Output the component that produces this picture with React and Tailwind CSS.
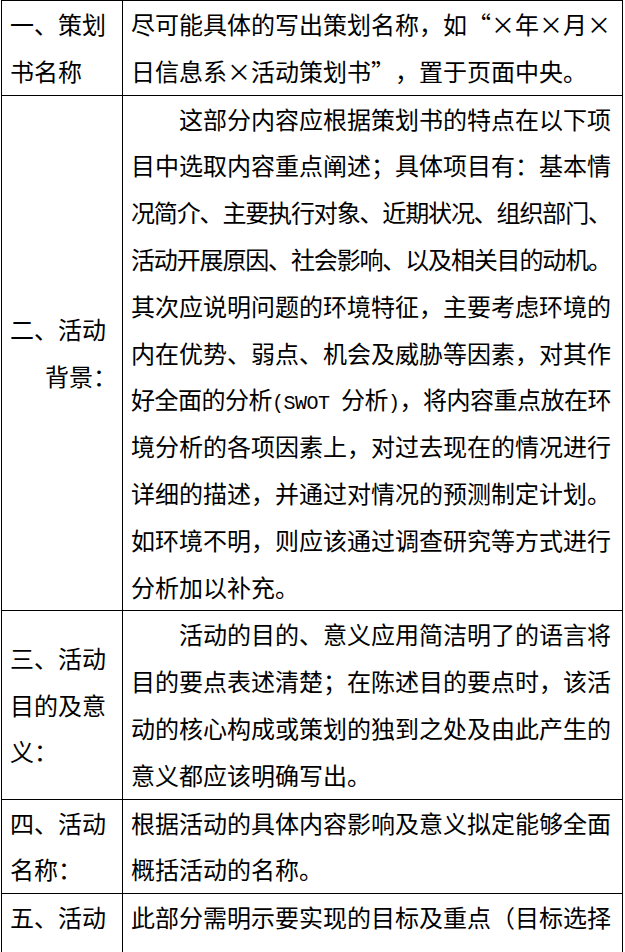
const Line = ({ children, className = "" }) => (
  <div className={`h-[46.8px] whitespace-nowrap ${className}`}>{children}</div>
);

const Wide = ({ children, align = "text-center" }) => (
  <span className={`inline-block w-[24px] ${align}`}>{children}</span>
);

const Mono = ({ children }) => (
  <span className="font-['Liberation_Mono',monospace] text-[20px] leading-none">{children}</span>
);

const Row = ({ label, children, center = true }) => (
  <div className="grid grid-cols-[121px_1fr] border-b border-black">
    <div
      className={`border-r border-black pl-2 flex flex-col ${
        center ? "justify-center" : "justify-start"
      }`}
    >
      {label}
    </div>
    <div className="pl-2">{children}</div>
  </div>
);

export default function App() {
  return (
    <div className="bg-white min-h-screen text-black text-[24px] leading-[46.8px] font-['Noto_Sans_CJK_SC',sans-serif]">
      <div className="ml-px w-[622px] border-l border-t border-r border-black">
        <Row
          center={false}
          label={
            <>
              <Line>一、策划</Line>
              <Line>书名称</Line>
            </>
          }
        >
          <Line>
            尽可能具体的写出策划名称，如<Wide align="text-right">“</Wide>
            <Wide>×</Wide>年<Wide>×</Wide>月<Wide>×</Wide>
          </Line>
          <Line>
            日信息系<Wide>×</Wide>活动策划书<Wide align="text-left">”</Wide>，置于页面中央。
          </Line>
        </Row>

        <Row
          label={
            <>
              <Line>二、活动</Line>
              <Line className="pl-[35px]">背景：</Line>
            </>
          }
        >
          <Line className="pl-[48px]">这部分内容应根据策划书的特点在以下项</Line>
          <Line>目中选取内容重点阐述；具体项目有：基本情</Line>
          <Line className="tracking-[-1.15px]">况简介、主要执行对象、近期状况、组织部门、</Line>
          <Line className="tracking-[-1.15px]">活动开展原因、社会影响、以及相关目的动机。</Line>
          <Line>其次应说明问题的环境特征，主要考虑环境的</Line>
          <Line>内在优势、弱点、机会及威胁等因素，对其作</Line>
          <Line className="tracking-[-0.5px]">
            好全面的分析<Mono>(SWOT </Mono>分析<Mono>)</Mono>，将内容重点放在环
          </Line>
          <Line>境分析的各项因素上，对过去现在的情况进行</Line>
          <Line>详细的描述，并通过对情况的预测制定计划。</Line>
          <Line>如环境不明，则应该通过调查研究等方式进行</Line>
          <Line>分析加以补充。</Line>
        </Row>

        <Row
          label={
            <>
              <Line>三、活动</Line>
              <Line>目的及意</Line>
              <Line>义：</Line>
            </>
          }
        >
          <Line className="pl-[48px]">活动的目的、意义应用简洁明了的语言将</Line>
          <Line>目的要点表述清楚；在陈述目的要点时，该活</Line>
          <Line>动的核心构成或策划的独到之处及由此产生的</Line>
          <Line>意义都应该明确写出。</Line>
        </Row>

        <Row
          label={
            <>
              <Line>四、活动</Line>
              <Line>名称：</Line>
            </>
          }
        >
          <Line>根据活动的具体内容影响及意义拟定能够全面</Line>
          <Line>概括活动的名称。</Line>
        </Row>

        <Row
          center={false}
          label={
            <>
              <Line>五、活动</Line>
              <Line />
            </>
          }
        >
          <Line>此部分需明示要实现的目标及重点（目标选择</Line>
          <Line />
        </Row>
      </div>
    </div>
  );
}
